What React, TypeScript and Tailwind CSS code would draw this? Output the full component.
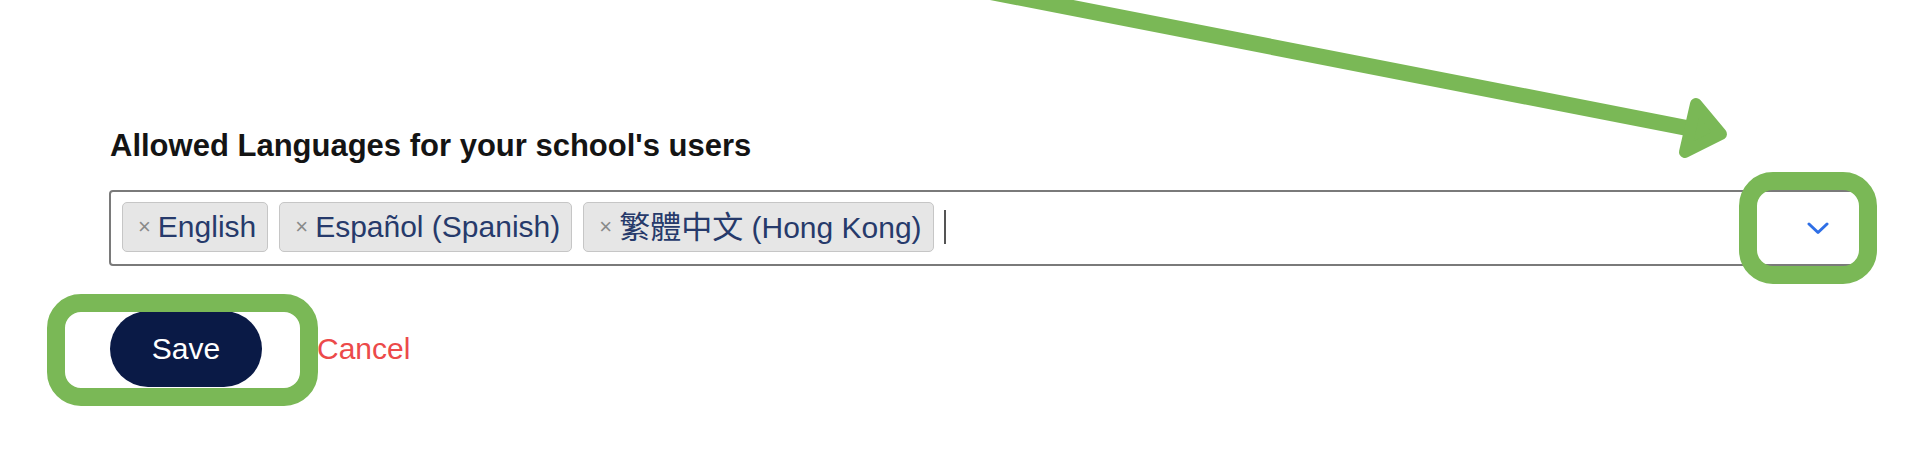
import React from 'react'

const tags: { cjk?: string; label: string }[] = [
  { label: 'English' },
  { label: 'Español (Spanish)' },
  { cjk: '繁體中文', label: ' (Hong Kong)' },
]

function Tag({ cjk, label }: { cjk?: string; label: string }) {
  return (
    <div className="flex h-[50px] shrink-0 items-center rounded-[5px] border border-[#c6c6c6] bg-[#e6e6e6] pl-[15px] pr-[11px]">
      <span className="mr-[7px] text-[22px] leading-none text-[#8a8a8a]">×</span>
      <span className="whitespace-pre text-[30px] leading-none text-[#263a6b]">
        {cjk && <span className="text-[31px]">{cjk}</span>}
        {label}
      </span>
    </div>
  )
}

export default function App() {
  return (
    <div
      className="relative h-[462px] w-[1908px] overflow-hidden bg-white"
      style={{ fontFamily: '"Liberation Sans", "Noto Sans CJK TC", Arial, sans-serif' }}
    >
      <div className="flex flex-col pl-[109px] pt-[130px]">
        <h2 className="ml-[1px] text-[31px] font-bold leading-none text-[#141414]">
          Allowed Languages for your school's users
        </h2>

        {/* Multi-select field */}
        <div className="mt-[29px] flex h-[76px] w-[1753px] items-start rounded-[4px] border-2 border-[#7a7a7a] bg-white pl-[11px] pt-[10px]">
          <div className="flex items-center gap-[11px]">
            {tags.map((t) => (
              <Tag key={t.label} cjk={t.cjk} label={t.label} />
            ))}
            <div className="ml-[-1px] h-[34px] w-[2px] bg-[#555]" />
          </div>
          <div className="ml-auto mr-[31px] mt-[20px]">
            <svg width="22" height="13" viewBox="0 0 22 13" fill="none">
              <path d="M2 2 L11 10.5 L20 2" stroke="#2f6fe6" strokeWidth="3" strokeLinecap="round" strokeLinejoin="round" />
            </svg>
          </div>
        </div>

        {/* Actions */}
        <div className="mt-[45px] flex items-center">
          <button className="ml-[1px] flex h-[76px] w-[152px] items-center justify-center rounded-full bg-[#0a1a46] text-[30px] leading-none text-white">
            Save
          </button>
          <button className="ml-[55px] text-[30px] leading-none text-[#ec4a4a]">Cancel</button>
        </div>
      </div>

      {/* Annotation highlights */}
      <div className="absolute left-[1739px] top-[172px] h-[112px] w-[138px] rounded-[34px] border-[18px] border-[#7ab856]" />
      <div className="absolute left-[47px] top-[294px] h-[112px] w-[271px] rounded-[34px] border-[18px] border-[#7ab856]" />

      <svg className="pointer-events-none absolute left-0 top-0" width="1908" height="462" viewBox="0 0 1908 462">
        <line x1="960" y1="-14" x2="1692" y2="129" stroke="#7ab856" strokeWidth="16" />
        <polygon
          points="1696,104 1721,134 1685,152"
          fill="#7ab856"
          stroke="#7ab856"
          strokeWidth="12"
          strokeLinejoin="round"
        />
      </svg>
    </div>
  )
}
